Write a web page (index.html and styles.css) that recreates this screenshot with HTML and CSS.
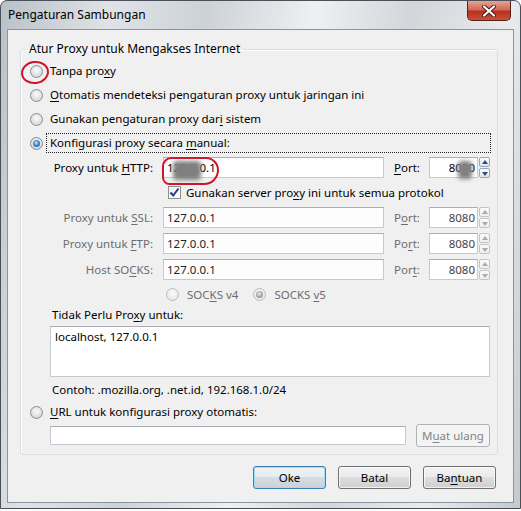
FILE: index.html
```html
<!DOCTYPE html>
<html lang="id">
<head>
  <meta charset="UTF-8">
  <title>Pengaturan Sambungan</title>
  <link rel="stylesheet" href="styles.css">
</head>
<body>
  <div class="window">
    <div class="titlebar">
      <span class="title">Pengaturan Sambungan</span>
      <span class="close">
        <svg width="16" height="12" viewBox="0 0 16 12">
          <path d="M3 1.5 L13 10.5 M13 1.5 L3 10.5" stroke="#4a1a12" stroke-width="4" stroke-linecap="round"/>
          <path d="M3 1.5 L13 10.5 M13 1.5 L3 10.5" stroke="#fff" stroke-width="2.2" stroke-linecap="round"/>
        </svg>
      </span>
    </div>

    <div class="client">
      <fieldset class="group">
        <legend>Atur Proxy untuk Mengakses Internet</legend>

        <div class="opt"><span class="radio"></span><span class="opt-text">Tanpa pro<u>x</u>y</span></div>
        <div class="opt"><span class="radio"></span><span class="opt-text"><u>O</u>tomatis mendeteksi pengaturan proxy untuk jaringan ini</span></div>
        <div class="opt"><span class="radio"></span><span class="opt-text">Gunakan pengaturan proxy dar<u>i</u> sistem</span></div>
        <div class="opt"><span class="radio on"></span><span class="opt-text focus">Konfigurasi proxy secara <u>m</u>anual:</span></div>

        <div class="proxy-grid">
          <label class="lbl">Proxy untuk <u>H</u>TTP:</label>
          <div class="field">127.0.0.1</div>
          <label class="lbl-port"><u>P</u>ort:</label>
          <div class="spin">
            <div class="field num">8080</div>
            <div class="arrows">
              <span class="arr up"></span>
              <span class="arr down"></span>
            </div>
          </div>

          <div class="check-row">
            <span class="check">
              <svg width="11" height="11" viewBox="0 0 11 11"><path d="M1.5 5.5 L4.2 8.5 L9.5 1.5" fill="none" stroke="#1e3f80" stroke-width="2"/></svg>
            </span>
            Gunakan server pro<u>x</u>y ini untuk semua protokol
          </div>

          <label class="lbl off">Proxy untuk <u>S</u>SL:</label>
          <div class="field off">127.0.0.1</div>
          <label class="lbl-port off">P<u>o</u>rt:</label>
          <div class="spin off">
            <div class="field num">8080</div>
            <div class="arrows"><span class="arr up"></span><span class="arr down"></span></div>
          </div>

          <label class="lbl off">Proxy untuk <u>F</u>TP:</label>
          <div class="field off">127.0.0.1</div>
          <label class="lbl-port off">Po<u>r</u>t:</label>
          <div class="spin off">
            <div class="field num">8080</div>
            <div class="arrows"><span class="arr up"></span><span class="arr down"></span></div>
          </div>

          <label class="lbl off">Host SO<u>C</u>KS:</label>
          <div class="field off">127.0.0.1</div>
          <label class="lbl-port off">Por<u>t</u>:</label>
          <div class="spin off">
            <div class="field num">8080</div>
            <div class="arrows"><span class="arr up"></span><span class="arr down"></span></div>
          </div>

          <div class="socks-row">
            <span class="radio off"></span><span class="socks-text">SOC<u>K</u>S v4</span>
            <span class="radio on off"></span><span class="socks-text">SOCKS <u>v</u>5</span>
          </div>
        </div>

        <div class="manual">
          <div class="noproxy">Tidak Perlu Pro<u>x</u>y untuk:</div>
          <div class="textarea">localhost, 127.0.0.1</div>
          <div class="hint">Contoh: .mozilla.org, .net.id, 192.168.1.0/24</div>
        </div>

        <div class="opt"><span class="radio"></span><span class="opt-text"><u>U</u>RL untuk konfigurasi proxy otomatis:</span></div>
        <div class="url-row">
          <div class="field url"></div>
          <span class="btn disabled">M<u>u</u>at ulang</span>
        </div>
      </fieldset>

      <div class="actions">
        <span class="btn default">Oke</span>
        <span class="btn">Batal</span>
        <span class="btn">Ba<u>n</u>tuan</span>
      </div>
    </div>

    <!-- coretan merah dan sensor di screenshot -->
    <span class="mark mark-radio"></span>
    <span class="mark mark-http"></span>
    <span class="smudge smudge-http"></span>
    <span class="smudge smudge-port"></span>
  </div>
</body>
</html>
```

FILE: styles.css
```css
* {
  box-sizing: border-box;
}

body {
  margin: 0;
  background: #fff;
  font-family: "Noto Sans", "Open Sans", sans-serif;
  font-size: 11.5px;
  color: #000;
}

u {
  text-decoration: underline;
  text-underline-offset: 2px;
}

.window {
  position: relative;
  width: 521px;
  height: 509px;
  border: 1px solid #4a5058;
  border-radius: 7px 7px 0 0;
  background: linear-gradient(100deg, #b9c0c7 0%, #dfe3e7 18%, #cdd2d7 34%, #eef0f2 52%, #d2d6da 68%, #e9ebed 84%, #c3c9cf 100%);
  overflow: hidden;
}

.titlebar {
  display: flex;
  align-items: flex-start;
  height: 28px;
}

.title {
  margin: 6px 0 0 7px;
  font-size: 12px;
  line-height: 16px;
}

.close {
  margin-left: auto;
  margin-right: 9px;
  width: 44px;
  height: 20px;
  border: 1px solid #5b2118;
  border-top: none;
  border-radius: 0 0 5px 5px;
  background: linear-gradient(#e3a597 0%, #d26a55 45%, #b8321c 55%, #c9503a 100%);
  display: flex;
  align-items: center;
  justify-content: center;
}

.client {
  margin-left: 6px;
  width: 507px;
  height: 474px;
  border: 1px solid #8c959e;
  background: #f0f0f0;
  padding-top: 11px;
}

/* group box */
.group {
  margin: 0 0 0 12px;
  width: 478px;
  border: 1px solid #d5dfe5;
  border-radius: 3px;
  box-shadow: inset 1px 1px 0 #fff;
  padding: 4px 7px 7px 9px;
}

.group legend {
  padding: 0 3px;
  margin-left: -4px;
  font-size: 12px;
  line-height: 16px;
}

.opt {
  display: flex;
  align-items: center;
  height: 20px;
  margin-bottom: 4px;
}

.opt-text {
  margin-left: 4px;
  padding: 0 3px;
  line-height: 18px;
  white-space: nowrap;
}

.opt-text.focus {
  flex: 1;
  outline: 1px dotted #222;
  outline-offset: 0;
}

.radio {
  position: relative;
  flex: none;
  width: 13px;
  height: 13px;
  border-radius: 50%;
  border: 1px solid #8a8c8f;
  background: radial-gradient(circle at 50% 40%, #fafafa 0%, #e2e2e2 55%, #c4c4c4 100%);
}

.radio.on::after {
  content: "";
  position: absolute;
  left: 2px;
  top: 2px;
  width: 7px;
  height: 7px;
  border-radius: 50%;
  background: radial-gradient(circle at 45% 40%, #c9e6fb 0%, #3f8fd2 45%, #0f3f78 100%);
}

.radio.off {
  border-color: #b9bbbd;
  background: radial-gradient(circle at 50% 40%, #fbfbfb 0%, #ececec 60%, #dcdcdc 100%);
}

.radio.on.off::after {
  background: radial-gradient(circle at 45% 40%, #f0f0f0 0%, #a8a8a8 50%, #7b7b7b 100%);
}

/* proxy rows */
.proxy-grid {
  display: grid;
  grid-template-columns: 123px 221px 25px 61px;
  column-gap: 10px;
  row-gap: 5px;
  align-items: center;
}

.lbl {
  text-align: right;
  white-space: nowrap;
}

.lbl-port {
  white-space: nowrap;
}

.off {
  color: #6d6d6d;
}

.field {
  height: 21px;
  border: 1px solid #c5cad0;
  border-top-color: #abadb3;
  background: #fff;
  padding: 0 3px;
  line-height: 19px;
  white-space: nowrap;
  overflow: hidden;
}

.field.off {
  color: #222;
  background: #fdfdfd;
}

.spin {
  display: flex;
  height: 21px;
}

.spin .field {
  width: 49px;
  text-align: right;
  padding-right: 2px;
}

.spin.off .field {
  color: #444;
}

.arrows {
  display: flex;
  flex-direction: column;
  gap: 1px;
  width: 12px;
  padding-left: 1px;
}

.arr {
  flex: 1;
  position: relative;
  border: 1px solid #9aa7b5;
  border-radius: 2px;
  background: linear-gradient(#fbfcfd, #dfe6ee);
}

.arr::after {
  content: "";
  position: absolute;
  left: 2px;
  border-left: 3px solid transparent;
  border-right: 3px solid transparent;
}

.arr.up::after {
  top: 2px;
  border-bottom: 4px solid #2c4f7c;
}

.arr.down::after {
  top: 3px;
  border-top: 4px solid #2c4f7c;
}

.spin.off .arr {
  border-color: #c3c6c9;
  background: linear-gradient(#fafafa, #eeeeee);
}

.spin.off .arr.up::after {
  border-bottom-color: #aaa;
}

.spin.off .arr.down::after {
  border-top-color: #aaa;
}

.check-row {
  grid-column: 2 / 5;
  display: flex;
  align-items: center;
  height: 19px;
  padding-left: 5px;
  white-space: nowrap;
}

.check {
  width: 13px;
  height: 13px;
  margin-right: 5px;
  border: 1px solid #8e8f8f;
  background: linear-gradient(135deg, #eef0f2, #fff);
  display: flex;
  align-items: center;
  justify-content: center;
}

.socks-row {
  grid-column: 2 / 5;
  display: flex;
  align-items: center;
  height: 20px;
  margin-top: -1px;
  padding-left: 3px;
}

.socks-text {
  margin: 0 15px 0 8px;
  color: #6d6d6d;
}

/* no proxy list */
.manual {
  padding-left: 20px;
}

.noproxy {
  margin-top: 3px;
  padding-left: 2px;
  line-height: 16px;
}

.textarea {
  margin-top: 3px;
  height: 51px;
  border: 1px solid #c5cad0;
  border-top-color: #abadb3;
  background: #fff;
  padding: 1px 4px;
  line-height: 17px;
}

.hint {
  margin: 5px 0 4px;
  padding-left: 2px;
  line-height: 16px;
}

.url-row {
  display: flex;
  align-items: center;
  gap: 10px;
  margin: -2px 0 0 20px;
  height: 23px;
}

.url-row .field {
  flex: 1;
  height: 19px;
}

.btn {
  display: inline-flex;
  align-items: center;
  justify-content: center;
  width: 73px;
  height: 23px;
  border: 1px solid #707070;
  border-radius: 3px;
  background: linear-gradient(#f2f2f2 0%, #ebebeb 49%, #dddddd 50%, #cfcfcf 100%);
  box-shadow: inset 0 0 0 1px rgba(255, 255, 255, 0.7);
}

.btn.disabled {
  width: 74px;
  border-color: #adb2b5;
  background: #f4f4f4;
  color: #838383;
  box-shadow: none;
}

.btn.default {
  border-color: #3c7fb1;
  box-shadow: inset 0 0 0 1px #9fdcf7;
  background: linear-gradient(#f0f3f5 0%, #e6ebee 49%, #d6dde2 50%, #c9d2d8 100%);
}

.actions {
  display: flex;
  justify-content: flex-end;
  gap: 12px;
  margin-top: 11px;
  padding-right: 17px;
}

/* annotations drawn on the screenshot */
.mark {
  position: absolute;
  border: 2px solid #d0142c;
  border-radius: 50%;
}

.mark-radio {
  left: 20px;
  top: 60px;
  width: 28px;
  height: 23px;
  transform: rotate(-8deg);
}

.mark-http {
  left: 161px;
  top: 156px;
  width: 57px;
  height: 28px;
  border-radius: 10px 14px 16px 8px;
}

.smudge {
  position: absolute;
  background: #808080;
  filter: blur(2px);
  border-radius: 4px;
}

.smudge-http {
  left: 172px;
  top: 160px;
  width: 28px;
  height: 19px;
}

.smudge-port {
  left: 457px;
  top: 160px;
  width: 14px;
  height: 18px;
}
```
